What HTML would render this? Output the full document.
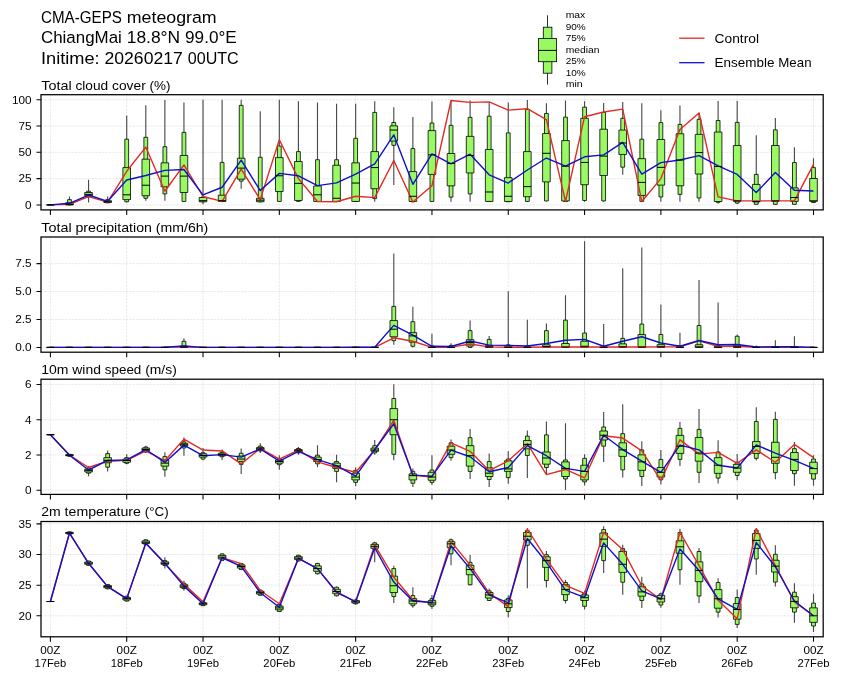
<!DOCTYPE html>
<html><head><meta charset="utf-8"><title>CMA-GEPS meteogram</title>
<style>html,body{margin:0;padding:0;background:#fff;}body{width:841px;height:680px;overflow:hidden;font-family:"Liberation Sans",sans-serif;}svg{display:block}</style>
</head><body>
<svg width="841" height="680" viewBox="0 0 841 680" style="will-change:transform" font-family="Liberation Sans, sans-serif">
<rect width="841" height="680" fill="#fff"/>
<text y="23.00" font-size="16.32" fill="#000"><tspan x="41.00" textLength="80.87" lengthAdjust="spacingAndGlyphs">CMA-GEPS</tspan><tspan x="126.76" textLength="89.95" lengthAdjust="spacingAndGlyphs">meteogram</tspan></text>
<text y="43.30" font-size="16.32" fill="#000"><tspan x="41.00" textLength="80.79" lengthAdjust="spacingAndGlyphs">ChiangMai</tspan><tspan x="126.69" textLength="53.50" lengthAdjust="spacingAndGlyphs">18.8°N</tspan><tspan x="185.08" textLength="51.71" lengthAdjust="spacingAndGlyphs">99.0°E</tspan></text>
<text y="64.10" font-size="16.32" fill="#000"><tspan x="41.00" textLength="58.57" lengthAdjust="spacingAndGlyphs">Initime:</tspan><tspan x="104.46" textLength="78.36" lengthAdjust="spacingAndGlyphs">20260217</tspan><tspan x="187.72" textLength="51.02" lengthAdjust="spacingAndGlyphs">00UTC</tspan></text>
<clipPath id="c0"><rect x="41.0" y="94.7" width="782.2" height="115.2"/></clipPath>
<text y="89.50" font-size="12.83" fill="#000"><tspan x="41.30" textLength="30.32" lengthAdjust="spacingAndGlyphs">Total</tspan><tspan x="75.47" textLength="32.78" lengthAdjust="spacingAndGlyphs">cloud</tspan><tspan x="112.10" textLength="33.64" lengthAdjust="spacingAndGlyphs">cover</tspan><tspan x="149.58" textLength="20.93" lengthAdjust="spacingAndGlyphs">(%)</tspan></text>
<path d="M50.40 94.7V209.9 M126.71 94.7V209.9 M203.02 94.7V209.9 M279.33 94.7V209.9 M355.64 94.7V209.9 M431.95 94.7V209.9 M508.26 94.7V209.9 M584.57 94.7V209.9 M660.88 94.7V209.9 M737.19 94.7V209.9 M813.50 94.7V209.9 M41.0 204.90H823.2 M41.0 178.62H823.2 M41.0 152.34H823.2 M41.0 126.06H823.2 M41.0 99.78H823.2" stroke="#dcdcdc" stroke-width="0.64" stroke-dasharray="2.37 1.02" fill="none"/>
<g clip-path="url(#c0)">
<path d="M69.48 196.49V204.90 M88.56 179.67V202.38 M107.63 196.49V203.32 M126.71 115.55V202.38 M145.79 105.35V200.70 M164.87 99.99V200.70 M183.94 102.41V201.43 M203.02 99.78V204.37 M222.10 99.78V202.27 M241.18 99.78V188.71 M260.25 111.34V202.27 M279.33 99.78V201.75 M298.41 101.15V201.75 M317.49 102.41V201.75 M336.56 103.77V201.75 M355.64 103.77V201.75 M374.72 101.15V201.75 M393.79 107.14V184.93 M412.87 117.12V201.75 M431.95 101.46V201.75 M451.03 100.83V201.75 M470.11 100.52V201.75 M489.18 101.88V201.75 M508.26 102.41V201.75 M527.34 99.99V201.75 M546.41 103.35V201.43 M565.49 100.52V201.75 M584.57 101.15V201.75 M603.65 102.93V201.75 M622.73 101.88V174.84 M641.80 103.35V201.75 M660.88 110.19V201.75 M679.96 105.46V201.75 M699.03 112.71V201.75 M718.11 100.94V203.85 M737.19 100.94V203.85 M756.27 135.21V204.58 M775.35 118.07V204.58 M794.42 147.19V204.58 M813.50 158.23V202.80" stroke="#4c4c4c" stroke-width="1.15" fill="none"/>
<path d="M48.49 204.90H52.31V204.90H48.49Z M67.57 199.64H71.39V204.90H67.57Z M86.65 191.23H90.46V196.70H86.65Z M105.72 199.64H109.54V202.80H105.72Z M124.80 139.20H128.62V201.75H124.80Z M143.88 137.31H147.70V198.28H143.88Z M162.96 146.66H166.77V193.86H162.96Z M182.03 132.37H185.85V201.43H182.03Z M201.11 197.02H204.93V201.75H201.11Z M220.19 162.43H224.01V201.43H220.19Z M239.27 105.35H243.08V181.14H239.27Z M258.34 157.28H262.16V201.75H258.34Z M277.42 146.03H281.24V201.43H277.42Z M296.50 151.60H300.32V201.33H296.50Z M315.58 159.70H319.39V201.43H315.58Z M334.65 159.70H338.47V201.43H334.65Z M353.73 138.25H357.55V201.43H353.73Z M372.81 112.39H376.63V198.59H372.81Z M391.89 122.49H395.70V145.30H391.89Z M410.96 148.56H414.78V201.75H410.96Z M430.04 123.01H433.86V201.43H430.04Z M449.12 125.32H452.94V197.12H449.12Z M468.20 117.34H472.01V193.86H468.20Z M487.27 116.18H491.09V201.43H487.27Z M506.35 132.89H510.17V201.75H506.35Z M525.43 109.45H529.25V201.43H525.43Z M544.51 113.45H548.32V200.91H544.51Z M563.58 117.12H567.40V201.43H563.58Z M582.66 107.14H586.48V200.48H582.66Z M601.74 112.50H605.56V200.91H601.74Z M620.82 118.28H624.63V167.16H620.82Z M639.89 139.20H643.71V201.43H639.89Z M658.97 122.59H662.79V196.91H658.97Z M678.05 124.48H681.87V194.39H678.05Z M697.13 119.33H700.94V197.96H697.13Z M716.20 120.49H720.02V202.27H716.20Z M735.28 122.38H739.10V203.11H735.28Z M754.36 174.42H758.18V204.37H754.36Z M773.44 129.84H777.25V204.37H773.44Z M792.51 162.54H796.33V204.37H792.51Z M811.59 167.58H815.41V202.48H811.59Z" stroke="#000" stroke-width="0.8" fill="#98f962"/>
<path d="M46.58 204.90H54.22V204.90H46.58Z M65.66 202.80H73.29V204.90H65.66Z M84.74 192.50H92.37V195.75H84.74Z M103.82 200.70H111.45V202.48H103.82Z M122.89 167.58H130.53V199.64H122.89Z M141.97 159.17H149.60V195.75H141.97Z M161.05 162.85H168.68V186.82H161.05Z M180.13 155.49H187.76V192.50H180.13Z M199.20 197.54H206.84V201.75H199.20Z M218.28 195.23H225.91V201.43H218.28Z M237.36 158.23H244.99V179.15H237.36Z M256.44 198.28H264.07V201.75H256.44Z M275.51 157.60H283.15V191.55H275.51Z M294.59 161.49H302.22V200.48H294.59Z M313.67 185.98H321.30V201.43H313.67Z M332.75 165.27H340.38V201.43H332.75Z M351.82 162.85H359.46V201.43H351.82Z M370.90 151.60H378.53V188.71H370.90Z M389.98 125.85H397.61V141.09H389.98Z M409.06 171.58H416.69V201.43H409.06Z M428.13 130.58H435.77V174.42H428.13Z M447.21 153.50H454.84V185.87H447.21Z M466.29 136.36H473.92V172.94H466.29Z M485.37 149.50H493.00V201.43H485.37Z M504.44 177.67H512.08V201.43H504.44Z M523.52 151.60H531.15V196.70H523.52Z M542.60 133.52H550.23V181.88H542.60Z M561.68 140.57H569.31V200.91H561.68Z M580.75 118.28H588.39V184.72H580.75Z M599.83 129.21H607.46V175.47H599.83Z M618.91 130.05H626.54V154.44H618.91Z M637.99 158.65H645.62V195.44H637.99Z M657.06 139.52H664.70V185.14H657.06Z M676.14 133.73H683.77V185.77H676.14Z M695.22 134.36H702.85V173.99H695.22Z M714.30 132.05H721.93V201.54H714.30Z M733.37 145.51H741.01V201.22H733.37Z M752.45 184.40H760.08V201.85H752.45Z M771.53 145.51H779.16V201.22H771.53Z M790.61 187.87H798.24V201.43H790.61Z M809.68 178.51H817.32V201.22H809.68Z" stroke="#000" stroke-width="0.8" fill="#98f962"/>
<polyline points="50.40,204.90 69.48,204.37 88.56,196.70 107.63,202.06 126.71,171.26 145.79,147.08 164.87,191.23 183.94,164.95 203.02,196.49 222.10,201.43 241.18,169.16 260.25,199.64 279.33,139.73 298.41,178.62 317.49,201.43 336.56,201.75 355.64,196.28 374.72,197.65 393.79,160.54 412.87,202.06 431.95,185.66 451.03,100.52 470.11,102.41 489.18,101.88 508.26,110.08 527.34,108.72 546.41,119.54 565.49,201.43 584.57,116.70 603.65,111.97 622.73,109.14 641.80,201.43 660.88,178.62 679.96,129.42 699.03,112.92 718.11,196.91 737.19,200.91 756.27,200.91 775.35,200.91 794.42,200.91 813.50,164.43" stroke="#e42a22" stroke-width="1.4" fill="none" stroke-linejoin="round"/>
<polyline points="50.40,204.90 69.48,203.32 88.56,195.02 107.63,201.33 126.71,179.99 145.79,175.47 164.87,170.42 183.94,169.47 203.02,194.81 222.10,187.24 241.18,160.12 260.25,190.60 279.33,173.36 298.41,175.78 317.49,185.66 336.56,182.82 355.64,174.20 374.72,163.90 393.79,134.78 412.87,184.30 431.95,153.81 451.03,163.90 470.11,154.23 489.18,174.84 508.26,183.04 527.34,170.00 546.41,158.02 565.49,166.22 584.57,156.76 603.65,154.86 622.73,142.46 641.80,174.20 660.88,162.64 679.96,160.01 699.03,155.60 718.11,165.80 737.19,174.42 756.27,192.50 775.35,172.52 794.42,190.18 813.50,191.02" stroke="#1010cc" stroke-width="1.4" fill="none" stroke-linejoin="round"/>
<path d="M46.58 204.90H54.22 M65.66 204.37H73.29 M84.74 194.39H92.37 M103.82 201.75H111.45 M122.89 194.81H130.53 M141.97 185.24H149.60 M161.05 176.10H168.68 M180.13 176.10H187.76 M199.20 200.70H206.84 M218.28 200.70H225.91 M237.36 168.11H244.99 M256.44 200.17H264.07 M275.51 175.78H283.15 M294.59 183.35H302.22 M313.67 194.81H321.30 M332.75 198.28H340.38 M351.82 183.04H359.46 M370.90 167.58H378.53 M389.98 130.05H397.61 M409.06 196.28H416.69 M428.13 154.86H435.77 M447.21 163.38H454.84 M466.29 155.49H473.92 M485.37 191.97H493.00 M504.44 196.28H512.08 M523.52 186.61H531.15 M542.60 153.29H550.23 M561.68 166.22H569.31 M580.75 162.43H588.39 M599.83 156.12H607.46 M618.91 142.98H626.54 M637.99 182.40H645.62 M657.06 167.37H664.70 M676.14 160.01H683.77 M695.22 152.55H702.85 M714.30 166.43H721.93 M733.37 200.91H741.01 M752.45 201.54H760.08 M771.53 200.91H779.16 M790.61 197.54H798.24 M809.68 200.91H817.32" stroke="#000" stroke-width="1" fill="none"/>
</g>
<rect x="41.0" y="94.7" width="782.2" height="115.2" fill="none" stroke="#000" stroke-width="1.25"/>
<path d="M50.40 209.9v5.0 M126.71 209.9v5.0 M203.02 209.9v5.0 M279.33 209.9v5.0 M355.64 209.9v5.0 M431.95 209.9v5.0 M508.26 209.9v5.0 M584.57 209.9v5.0 M660.88 209.9v5.0 M737.19 209.9v5.0 M813.50 209.9v5.0 M41.0 204.90h-4.5 M41.0 178.62h-4.5 M41.0 152.34h-4.5 M41.0 126.06h-4.5 M41.0 99.78h-4.5" stroke="#000" stroke-width="1.05" fill="none"/>
<text y="208.70" font-size="10.92" fill="#000"><tspan x="25.05" textLength="6.55" lengthAdjust="spacingAndGlyphs">0</tspan></text>
<text y="182.42" font-size="10.92" fill="#000"><tspan x="18.50" textLength="13.10" lengthAdjust="spacingAndGlyphs">25</tspan></text>
<text y="156.14" font-size="10.92" fill="#000"><tspan x="18.50" textLength="13.10" lengthAdjust="spacingAndGlyphs">50</tspan></text>
<text y="129.86" font-size="10.92" fill="#000"><tspan x="18.50" textLength="13.10" lengthAdjust="spacingAndGlyphs">75</tspan></text>
<text y="103.58" font-size="10.92" fill="#000"><tspan x="11.95" textLength="19.65" lengthAdjust="spacingAndGlyphs">100</tspan></text>
<clipPath id="c1"><rect x="41.0" y="237.0" width="782.2" height="115.19999999999999"/></clipPath>
<text y="231.80" font-size="12.83" fill="#000"><tspan x="41.30" textLength="30.32" lengthAdjust="spacingAndGlyphs">Total</tspan><tspan x="75.47" textLength="76.51" lengthAdjust="spacingAndGlyphs">precipitation</tspan><tspan x="155.83" textLength="52.45" lengthAdjust="spacingAndGlyphs">(mm/6h)</tspan></text>
<path d="M50.40 237.0V352.2 M126.71 237.0V352.2 M203.02 237.0V352.2 M279.33 237.0V352.2 M355.64 237.0V352.2 M431.95 237.0V352.2 M508.26 237.0V352.2 M584.57 237.0V352.2 M660.88 237.0V352.2 M737.19 237.0V352.2 M813.50 237.0V352.2 M41.0 347.40H823.2 M41.0 319.47H823.2 M41.0 291.55H823.2 M41.0 263.62H823.2" stroke="#dcdcdc" stroke-width="0.64" stroke-dasharray="2.37 1.02" fill="none"/>
<g clip-path="url(#c1)">
<path d="M164.87 346.28V347.40 M183.94 338.13V347.40 M355.64 346.28V347.40 M374.72 346.84V347.40 M393.79 253.57V344.83 M412.87 306.74V347.40 M431.95 333.66V347.40 M451.03 343.16V347.40 M470.11 320.59V347.40 M489.18 335.89V347.40 M508.26 291.21V347.40 M527.34 319.70V347.40 M546.41 323.50V347.40 M565.49 295.35V347.40 M584.57 241.28V347.40 M603.65 324.05V347.40 M622.73 268.32V347.40 M641.80 247.43V347.40 M660.88 304.51V347.40 M679.96 332.77V347.40 M699.03 279.93V347.40 M718.11 302.38V347.40 M737.19 334.44V347.40 M756.27 345.61V347.40 M775.35 340.25V347.40 M794.42 336.23V347.40 M813.50 346.84V347.40" stroke="#4c4c4c" stroke-width="1.15" fill="none"/>
<path d="M48.49 347.40H52.31V347.40H48.49Z M67.57 347.40H71.39V347.40H67.57Z M86.65 347.40H90.46V347.40H86.65Z M105.72 347.40H109.54V347.40H105.72Z M124.80 347.40H128.62V347.40H124.80Z M143.88 347.40H147.70V347.40H143.88Z M162.96 347.40H166.77V347.40H162.96Z M182.03 341.26H185.85V347.40H182.03Z M201.11 347.40H204.93V347.40H201.11Z M220.19 347.40H224.01V347.40H220.19Z M239.27 347.40H243.08V347.40H239.27Z M258.34 347.40H262.16V347.40H258.34Z M277.42 347.40H281.24V347.40H277.42Z M296.50 347.40H300.32V347.40H296.50Z M315.58 347.40H319.39V347.40H315.58Z M334.65 347.40H338.47V347.40H334.65Z M353.73 347.40H357.55V347.40H353.73Z M372.81 347.40H376.63V347.40H372.81Z M391.89 306.41H395.70V340.70H391.89Z M410.96 321.71H414.78V346.28H410.96Z M430.04 345.95H433.86V347.40H430.04Z M449.12 345.39H452.94V347.40H449.12Z M468.20 330.64H472.01V347.40H468.20Z M487.27 339.36H491.09V347.40H487.27Z M506.35 344.83H510.17V347.40H506.35Z M525.43 345.72H529.25V347.40H525.43Z M544.51 330.64H548.32V347.40H544.51Z M563.58 320.15H567.40V347.40H563.58Z M582.66 332.99H586.48V347.40H582.66Z M601.74 346.28H605.56V347.40H601.74Z M620.82 338.35H624.63V347.40H620.82Z M639.89 324.05H643.71V347.40H639.89Z M658.97 334.44H662.79V347.40H658.97Z M678.05 345.61H681.87V347.40H678.05Z M697.13 325.51H700.94V347.40H697.13Z M716.20 345.61H720.02V347.40H716.20Z M735.28 336.23H739.10V347.40H735.28Z M754.36 347.18H758.18V347.40H754.36Z M773.44 347.06H777.25V347.40H773.44Z M792.51 347.06H796.33V347.40H792.51Z M811.59 347.40H815.41V347.40H811.59Z" stroke="#000" stroke-width="0.8" fill="#98f962"/>
<path d="M46.58 347.40H54.22V347.40H46.58Z M65.66 347.40H73.29V347.40H65.66Z M84.74 347.40H92.37V347.40H84.74Z M103.82 347.40H111.45V347.40H103.82Z M122.89 347.40H130.53V347.40H122.89Z M141.97 347.40H149.60V347.40H141.97Z M161.05 347.40H168.68V347.40H161.05Z M180.13 346.06H187.76V347.40H180.13Z M199.20 347.40H206.84V347.40H199.20Z M218.28 347.40H225.91V347.40H218.28Z M237.36 347.40H244.99V347.40H237.36Z M256.44 347.40H264.07V347.40H256.44Z M275.51 347.40H283.15V347.40H275.51Z M294.59 347.40H302.22V347.40H294.59Z M313.67 347.40H321.30V347.40H313.67Z M332.75 347.40H340.38V347.40H332.75Z M351.82 347.40H359.46V347.40H351.82Z M370.90 347.40H378.53V347.40H370.90Z M389.98 320.59H397.61V336.79H389.98Z M409.06 332.66H416.69V342.15H409.06Z M428.13 347.06H435.77V347.40H428.13Z M447.21 347.06H454.84V347.40H447.21Z M466.29 339.69H473.92V345.95H466.29Z M485.37 345.39H493.00V347.40H485.37Z M504.44 346.28H512.08V347.40H504.44Z M523.52 347.06H531.15V347.40H523.52Z M542.60 344.83H550.23V347.40H542.60Z M561.68 343.49H569.31V347.40H561.68Z M580.75 341.26H588.39V347.40H580.75Z M599.83 347.06H607.46V347.40H599.83Z M618.91 343.83H626.54V347.40H618.91Z M637.99 334.55H645.62V347.40H637.99Z M657.06 344.72H664.70V347.40H657.06Z M676.14 346.84H683.77V347.40H676.14Z M695.22 344.72H702.85V347.40H695.22Z M714.30 346.28H721.93V347.40H714.30Z M733.37 345.17H741.01V347.40H733.37Z M752.45 347.40H760.08V347.40H752.45Z M771.53 347.40H779.16V347.40H771.53Z M790.61 347.40H798.24V347.40H790.61Z M809.68 347.40H817.32V347.40H809.68Z" stroke="#000" stroke-width="0.8" fill="#98f962"/>
<polyline points="50.40,347.40 69.48,347.40 88.56,347.40 107.63,347.40 126.71,347.40 145.79,347.40 164.87,347.40 183.94,346.84 203.02,347.40 222.10,347.40 241.18,347.40 260.25,347.40 279.33,347.40 298.41,347.40 317.49,347.40 336.56,347.40 355.64,347.40 374.72,347.40 393.79,337.79 412.87,341.26 431.95,347.40 451.03,347.18 470.11,343.94 489.18,346.84 508.26,347.18 527.34,347.18 546.41,347.06 565.49,347.06 584.57,347.06 603.65,347.06 622.73,347.06 641.80,347.06 660.88,346.84 679.96,346.84 699.03,340.92 718.11,346.28 737.19,346.28 756.27,347.40 775.35,347.40 794.42,347.40 813.50,347.40" stroke="#e42a22" stroke-width="1.4" fill="none" stroke-linejoin="round"/>
<polyline points="50.40,347.40 69.48,347.40 88.56,347.40 107.63,347.40 126.71,347.40 145.79,347.40 164.87,347.18 183.94,345.95 203.02,347.40 222.10,347.40 241.18,347.40 260.25,347.40 279.33,347.40 298.41,347.40 317.49,347.40 336.56,347.40 355.64,347.29 374.72,347.29 393.79,325.40 412.87,335.11 431.95,346.28 451.03,346.51 470.11,341.03 489.18,345.17 508.26,345.39 527.34,345.95 546.41,343.49 565.49,340.25 584.57,339.36 603.65,346.28 622.73,341.26 641.80,336.79 660.88,343.04 679.96,346.28 699.03,340.47 718.11,344.72 737.19,344.50 756.27,347.06 775.35,346.62 794.42,346.73 813.50,347.40" stroke="#1010cc" stroke-width="1.4" fill="none" stroke-linejoin="round"/>
<path d="M46.58 347.40H54.22 M65.66 347.40H73.29 M84.74 347.40H92.37 M103.82 347.40H111.45 M122.89 347.40H130.53 M141.97 347.40H149.60 M161.05 347.40H168.68 M180.13 347.18H187.76 M199.20 347.40H206.84 M218.28 347.40H225.91 M237.36 347.40H244.99 M256.44 347.40H264.07 M275.51 347.40H283.15 M294.59 347.40H302.22 M313.67 347.40H321.30 M332.75 347.40H340.38 M351.82 347.40H359.46 M370.90 347.40H378.53 M389.98 329.19H397.61 M409.06 335.89H416.69 M428.13 347.40H435.77 M447.21 347.40H454.84 M466.29 342.60H473.92 M485.37 346.84H493.00 M504.44 347.40H512.08 M523.52 347.40H531.15 M542.60 346.51H550.23 M561.68 347.06H569.31 M580.75 346.28H588.39 M599.83 347.40H607.46 M618.91 346.84H626.54 M637.99 347.06H645.62 M657.06 346.84H664.70 M676.14 347.40H683.77 M695.22 346.84H702.85 M714.30 347.18H721.93 M733.37 346.84H741.01 M752.45 347.40H760.08 M771.53 347.40H779.16 M790.61 347.40H798.24 M809.68 347.40H817.32" stroke="#000" stroke-width="1" fill="none"/>
</g>
<rect x="41.0" y="237.0" width="782.2" height="115.19999999999999" fill="none" stroke="#000" stroke-width="1.25"/>
<path d="M50.40 352.2v5.0 M126.71 352.2v5.0 M203.02 352.2v5.0 M279.33 352.2v5.0 M355.64 352.2v5.0 M431.95 352.2v5.0 M508.26 352.2v5.0 M584.57 352.2v5.0 M660.88 352.2v5.0 M737.19 352.2v5.0 M813.50 352.2v5.0 M41.0 347.40h-4.5 M41.0 319.47h-4.5 M41.0 291.55h-4.5 M41.0 263.62h-4.5" stroke="#000" stroke-width="1.05" fill="none"/>
<text y="351.20" font-size="10.92" fill="#000"><tspan x="15.22" textLength="16.38" lengthAdjust="spacingAndGlyphs">0.0</tspan></text>
<text y="323.27" font-size="10.92" fill="#000"><tspan x="15.22" textLength="16.38" lengthAdjust="spacingAndGlyphs">2.5</tspan></text>
<text y="295.35" font-size="10.92" fill="#000"><tspan x="15.22" textLength="16.38" lengthAdjust="spacingAndGlyphs">5.0</tspan></text>
<text y="267.43" font-size="10.92" fill="#000"><tspan x="15.22" textLength="16.38" lengthAdjust="spacingAndGlyphs">7.5</tspan></text>
<clipPath id="c2"><rect x="41.0" y="379.2" width="782.2" height="115.19999999999999"/></clipPath>
<text y="374.10" font-size="12.83" fill="#000"><tspan x="41.30" textLength="27.18" lengthAdjust="spacingAndGlyphs">10m</tspan><tspan x="72.32" textLength="28.62" lengthAdjust="spacingAndGlyphs">wind</tspan><tspan x="104.79" textLength="36.55" lengthAdjust="spacingAndGlyphs">speed</tspan><tspan x="145.19" textLength="31.61" lengthAdjust="spacingAndGlyphs">(m/s)</tspan></text>
<path d="M50.40 379.2V494.4 M126.71 379.2V494.4 M203.02 379.2V494.4 M279.33 379.2V494.4 M355.64 379.2V494.4 M431.95 379.2V494.4 M508.26 379.2V494.4 M584.57 379.2V494.4 M660.88 379.2V494.4 M737.19 379.2V494.4 M813.50 379.2V494.4 M41.0 490.30H823.2 M41.0 455.00H823.2 M41.0 419.70H823.2 M41.0 384.40H823.2" stroke="#dcdcdc" stroke-width="0.64" stroke-dasharray="2.37 1.02" fill="none"/>
<g clip-path="url(#c2)">
<path d="M69.48 453.94V456.76 M88.56 465.94V476.18 M107.63 450.41V471.41 M126.71 454.29V464.18 M145.79 445.65V452.88 M164.87 452.35V476.71 M183.94 437.53V455.71 M203.02 448.12V460.30 M222.10 449.53V459.94 M241.18 448.47V473.89 M260.25 443.35V452.88 M279.33 455.18V469.83 M298.41 447.06V454.65 M317.49 445.29V467.18 M336.56 454.82V482.36 M355.64 467.53V486.24 M374.72 440.00V454.65 M393.79 384.22V460.30 M412.87 468.41V486.95 M431.95 455.18V485.00 M451.03 439.47V460.82 M470.11 429.05V479.00 M489.18 453.59V486.95 M508.26 451.29V483.77 M527.34 430.47V477.94 M546.41 421.47V474.24 M565.49 423.23V489.95 M584.57 454.29V485.53 M603.65 411.93V461.88 M622.73 404.17V477.59 M641.80 441.23V486.06 M660.88 449.88V484.48 M679.96 421.99V465.94 M699.03 409.11V483.06 M718.11 440.17V483.59 M737.19 454.12V480.24 M756.27 407.35V460.47 M775.35 411.76V479.36 M794.42 441.94V485.71 M813.50 455.18V485.71" stroke="#4c4c4c" stroke-width="1.15" fill="none"/>
<path d="M48.49 434.70H52.31V434.70H48.49Z M67.57 454.29H71.39V456.24H67.57Z M86.65 467.88H90.46V473.18H86.65Z M105.72 453.59H109.54V467.18H105.72Z M124.80 457.65H128.62V463.30H124.80Z M143.88 447.06H147.70V452.00H143.88Z M162.96 456.59H166.77V469.83H162.96Z M182.03 441.94H185.85V447.94H182.03Z M201.11 452.71H204.93V459.06H201.11Z M220.19 452.35H224.01V456.76H220.19Z M239.27 453.24H243.08V464.35H239.27Z M258.34 446.18H262.16V450.94H258.34Z M277.42 458.35H281.24V464.71H277.42Z M296.50 448.47H300.32V452.88H296.50Z M315.58 455.18H319.39V463.82H315.58Z M334.65 461.53H338.47V471.41H334.65Z M353.73 470.36H357.55V482.36H353.73Z M372.81 445.65H376.63V452.88H372.81Z M391.89 398.52H395.70V454.29H391.89Z M410.96 471.41H414.78V483.24H410.96Z M430.04 470.00H433.86V482.36H430.04Z M449.12 442.82H452.94V457.65H449.12Z M468.20 437.70H472.01V471.41H468.20Z M487.27 461.53H491.09V479.53H487.27Z M506.35 459.06H510.17V477.59H506.35Z M525.43 436.11H529.25V455.53H525.43Z M544.51 434.88H548.32V467.53H544.51Z M563.58 459.94H567.40V479.00H563.58Z M582.66 458.35H586.48V481.83H582.66Z M601.74 426.94H605.56V446.18H601.74Z M620.82 433.64H624.63V469.83H620.82Z M639.89 449.88H643.71V476.53H639.89Z M658.97 459.41H662.79V479.71H658.97Z M678.05 428.35H681.87V459.41H678.05Z M697.13 429.41H700.94V472.30H697.13Z M716.20 452.00H720.02V478.12H716.20Z M735.28 462.24H739.10V475.47H735.28Z M754.36 421.47H758.18V458.35H754.36Z M773.44 419.35H777.25V472.65H773.44Z M792.51 448.65H796.33V473.71H792.51Z M811.59 459.06H815.41V479.18H811.59Z" stroke="#000" stroke-width="0.8" fill="#98f962"/>
<path d="M46.58 434.70H54.22V434.70H46.58Z M65.66 454.65H73.29V455.71H65.66Z M84.74 469.12H92.37V471.94H84.74Z M103.82 457.65H111.45V462.77H103.82Z M122.89 459.06H130.53V462.24H122.89Z M141.97 448.12H149.60V450.76H141.97Z M161.05 459.94H168.68V466.12H161.05Z M180.13 443.35H187.76V446.00H180.13Z M199.20 453.76H206.84V457.12H199.20Z M218.28 453.24H225.91V455.71H218.28Z M237.36 456.06H244.99V461.53H237.36Z M256.44 447.59H264.07V450.06H256.44Z M275.51 459.94H283.15V463.12H275.51Z M294.59 449.53H302.22V452.00H294.59Z M313.67 457.12H321.30V461.53H313.67Z M332.75 463.12H340.38V468.41H332.75Z M351.82 473.18H359.46V479.89H351.82Z M370.90 448.12H378.53V451.29H370.90Z M389.98 408.58H397.61V434.70H389.98Z M409.06 473.89H416.69V479.89H409.06Z M428.13 472.30H435.77V480.24H428.13Z M447.21 446.18H454.84V454.29H447.21Z M466.29 445.65H473.92V466.12H466.29Z M485.37 467.88H493.00V476.53H485.37Z M504.44 460.82H512.08V471.41H504.44Z M523.52 440.53H531.15V448.82H523.52Z M542.60 452.00H550.23V464.18H542.60Z M561.68 461.88H569.31V476.53H561.68Z M580.75 465.24H588.39V479.89H580.75Z M599.83 431.00H607.46V440.00H599.83Z M618.91 442.82H626.54V456.41H618.91Z M637.99 454.82H645.62V470.36H637.99Z M657.06 467.53H664.70V477.06H657.06Z M676.14 435.41H683.77V453.41H676.14Z M695.22 437.53H702.85V461.18H695.22Z M714.30 457.65H721.93V473.36H714.30Z M733.37 464.35H741.01V472.30H733.37Z M752.45 441.59H760.08V453.41H752.45Z M771.53 442.29H779.16V463.30H771.53Z M790.61 452.53H798.24V470.53H790.61Z M809.68 462.24H817.32V473.71H809.68Z" stroke="#000" stroke-width="0.8" fill="#98f962"/>
<polyline points="50.40,434.70 69.48,455.00 88.56,467.53 107.63,461.18 126.71,460.30 145.79,450.94 164.87,460.82 183.94,439.12 203.02,450.06 222.10,450.94 241.18,463.82 260.25,448.47 279.33,459.06 298.41,450.06 317.49,461.88 336.56,467.53 355.64,472.30 374.72,450.06 393.79,420.41 412.87,475.12 431.95,477.06 451.03,442.82 470.11,451.29 489.18,470.71 508.26,460.82 527.34,443.70 546.41,474.59 565.49,469.47 584.57,477.94 603.65,435.76 622.73,438.06 641.80,450.94 660.88,480.42 679.96,439.82 699.03,454.12 718.11,452.35 737.19,463.30 756.27,449.88 775.35,462.24 794.42,444.41 813.50,457.65" stroke="#e42a22" stroke-width="1.4" fill="none" stroke-linejoin="round"/>
<polyline points="50.40,434.70 69.48,455.18 88.56,470.00 107.63,460.47 126.71,459.94 145.79,449.53 164.87,462.41 183.94,445.12 203.02,455.71 222.10,454.65 241.18,457.12 260.25,449.00 279.33,461.18 298.41,451.29 317.49,459.59 336.56,465.59 355.64,476.18 374.72,449.53 393.79,423.76 412.87,475.12 431.95,476.18 451.03,450.06 470.11,456.76 489.18,471.77 508.26,467.53 527.34,445.65 546.41,455.71 565.49,468.41 584.57,471.41 603.65,435.23 622.73,449.53 641.80,461.18 660.88,472.30 679.96,445.12 699.03,449.88 718.11,465.24 737.19,468.06 756.27,444.94 775.35,453.06 794.42,460.47 813.50,468.41" stroke="#1010cc" stroke-width="1.4" fill="none" stroke-linejoin="round"/>
<path d="M46.58 434.70H54.22 M65.66 455.18H73.29 M84.74 470.36H92.37 M103.82 460.30H111.45 M122.89 460.47H130.53 M141.97 449.53H149.60 M161.05 463.12H168.68 M180.13 444.76H187.76 M199.20 455.53H206.84 M218.28 454.65H225.91 M237.36 459.06H244.99 M256.44 448.82H264.07 M275.51 461.53H283.15 M294.59 450.76H302.22 M313.67 459.59H321.30 M332.75 465.94H340.38 M351.82 477.06H359.46 M370.90 450.06H378.53 M389.98 419.70H397.61 M409.06 475.65H416.69 M428.13 477.06H435.77 M447.21 450.06H454.84 M466.29 455.71H473.92 M485.37 473.18H493.00 M504.44 468.94H512.08 M523.52 444.41H531.15 M542.60 458.00H550.23 M561.68 468.41H569.31 M580.75 471.41H588.39 M599.83 435.23H607.46 M618.91 449.88H626.54 M637.99 461.88H645.62 M657.06 472.30H664.70 M676.14 446.18H683.77 M695.22 453.06H702.85 M714.30 465.24H721.93 M733.37 468.06H741.01 M752.45 446.53H760.08 M771.53 457.29H779.16 M790.61 459.41H798.24 M809.68 468.59H817.32" stroke="#000" stroke-width="1" fill="none"/>
</g>
<rect x="41.0" y="379.2" width="782.2" height="115.19999999999999" fill="none" stroke="#000" stroke-width="1.25"/>
<path d="M50.40 494.4v5.0 M126.71 494.4v5.0 M203.02 494.4v5.0 M279.33 494.4v5.0 M355.64 494.4v5.0 M431.95 494.4v5.0 M508.26 494.4v5.0 M584.57 494.4v5.0 M660.88 494.4v5.0 M737.19 494.4v5.0 M813.50 494.4v5.0 M41.0 490.30h-4.5 M41.0 455.00h-4.5 M41.0 419.70h-4.5 M41.0 384.40h-4.5" stroke="#000" stroke-width="1.05" fill="none"/>
<text y="494.10" font-size="10.92" fill="#000"><tspan x="25.05" textLength="6.55" lengthAdjust="spacingAndGlyphs">0</tspan></text>
<text y="458.80" font-size="10.92" fill="#000"><tspan x="25.05" textLength="6.55" lengthAdjust="spacingAndGlyphs">2</tspan></text>
<text y="423.50" font-size="10.92" fill="#000"><tspan x="25.05" textLength="6.55" lengthAdjust="spacingAndGlyphs">4</tspan></text>
<text y="388.20" font-size="10.92" fill="#000"><tspan x="25.05" textLength="6.55" lengthAdjust="spacingAndGlyphs">6</tspan></text>
<clipPath id="c3"><rect x="41.0" y="521.5" width="782.2" height="115.29999999999995"/></clipPath>
<text y="516.40" font-size="12.83" fill="#000"><tspan x="41.30" textLength="19.48" lengthAdjust="spacingAndGlyphs">2m</tspan><tspan x="64.63" textLength="76.31" lengthAdjust="spacingAndGlyphs">temperature</tspan><tspan x="144.79" textLength="23.93" lengthAdjust="spacingAndGlyphs">(°C)</tspan></text>
<path d="M50.40 521.5V636.8 M126.71 521.5V636.8 M203.02 521.5V636.8 M279.33 521.5V636.8 M355.64 521.5V636.8 M431.95 521.5V636.8 M508.26 521.5V636.8 M584.57 521.5V636.8 M660.88 521.5V636.8 M737.19 521.5V636.8 M813.50 521.5V636.8 M41.0 615.80H823.2 M41.0 585.15H823.2 M41.0 554.50H823.2 M41.0 523.85H823.2" stroke="#dcdcdc" stroke-width="0.64" stroke-dasharray="2.37 1.02" fill="none"/>
<g clip-path="url(#c3)">
<path d="M69.48 531.64V534.45 M88.56 560.63V565.72 M107.63 584.17V589.20 M126.71 595.82V601.46 M145.79 539.42V545.06 M164.87 557.14V568.60 M183.94 580.86V590.67 M203.02 601.58V605.99 M222.10 553.40V560.88 M241.18 562.96V570.01 M260.25 589.69V595.69 M279.33 603.85V612.06 M298.41 554.75V561.49 M317.49 562.65V574.55 M336.56 586.56V596.49 M355.64 598.45V604.77 M374.72 541.63V562.29 M393.79 565.72V602.93 M412.87 587.23V607.83 M431.95 594.96V609.06 M451.03 538.56V565.17 M470.11 555.11V585.15 M489.18 588.58V601.09 M508.26 595.26V617.15 M527.34 528.14V588.21 M546.41 551.07V587.60 M565.49 579.63V603.54 M584.57 590.85V609.55 M603.65 526.30V572.89 M622.73 544.69V594.65 M641.80 576.75V608.01 M660.88 592.38V607.83 M679.96 528.75V584.66 M699.03 547.88V602.93 M718.11 578.28V617.39 M737.19 589.62V628.06 M756.27 527.96V574.73 M775.35 545.30V586.38 M794.42 583.19V622.79 M813.50 593.85V631.98" stroke="#4c4c4c" stroke-width="1.15" fill="none"/>
<path d="M48.49 601.52H52.31V601.52H48.49Z M67.57 531.82H71.39V534.27H67.57Z M86.65 561.00H90.46V565.35H86.65Z M105.72 584.54H109.54V588.83H105.72Z M124.80 596.18H128.62V601.09H124.80Z M143.88 539.79H147.70V544.69H143.88Z M162.96 560.63H166.77V565.53H162.96Z M182.03 583.31H185.85V588.58H182.03Z M201.11 601.88H204.93V605.69H201.11Z M220.19 553.89H224.01V560.38H220.19Z M239.27 563.45H243.08V569.52H239.27Z M258.34 590.12H262.16V595.26H258.34Z M277.42 604.40H281.24V611.51H277.42Z M296.50 555.24H300.32V561.00H296.50Z M315.58 563.45H319.39V573.75H315.58Z M334.65 587.23H338.47V595.82H334.65Z M353.73 599.98H357.55V603.79H353.73Z M372.81 542.85H376.63V549.60H372.81Z M391.89 568.60H395.70V596.55H391.89Z M410.96 595.57H414.78V605.69H410.96Z M430.04 598.64H433.86V606.30H430.04Z M449.12 539.79H452.94V553.89H449.12Z M468.20 562.29H472.01V584.78H468.20Z M487.27 590.85H491.09V600.47H487.27Z M506.35 598.45H510.17V611.51H506.35Z M525.43 530.59H529.25V545.30H525.43Z M544.51 554.68H548.32V580.55H544.51Z M563.58 582.51H567.40V600.47H563.58Z M582.66 593.36H586.48V606.30H582.66Z M601.74 529.55H605.56V560.63H601.74Z M620.82 548.62H624.63V582.27H620.82Z M639.89 583.92H643.71V600.47H639.89Z M658.97 593.85H662.79V605.01H658.97Z M678.05 532.43H681.87V569.70H678.05Z M697.13 551.50H700.94V596.00H697.13Z M716.20 582.51H720.02V612.12H716.20Z M735.28 597.53H739.10V624.38H735.28Z M754.36 530.10H758.18V558.97H754.36Z M773.44 554.32H777.25V582.09H773.44Z M792.51 592.20H796.33V612.12H792.51Z M811.59 603.11H815.41V625.98H811.59Z" stroke="#000" stroke-width="0.8" fill="#98f962"/>
<path d="M46.58 601.52H54.22V601.52H46.58Z M65.66 532.43H73.29V533.66H65.66Z M84.74 562.04H92.37V564.31H84.74Z M103.82 585.58H111.45V587.79H103.82Z M122.89 597.35H130.53V599.92H122.89Z M141.97 540.95H149.60V543.53H141.97Z M161.05 561.86H168.68V564.31H161.05Z M180.13 584.78H187.76V587.60H180.13Z M199.20 602.80H206.84V604.77H199.20Z M218.28 555.42H225.91V558.85H218.28Z M237.36 564.92H244.99V568.05H237.36Z M256.44 591.34H264.07V594.04H256.44Z M275.51 606.11H283.15V609.79H275.51Z M294.59 556.65H302.22V559.59H294.59Z M313.67 565.90H321.30V571.30H313.67Z M332.75 589.32H340.38V593.73H332.75Z M351.82 600.60H359.46V602.93H351.82Z M370.90 544.39H378.53V548.25H370.90Z M389.98 576.20H397.61V592.51H389.98Z M409.06 598.64H416.69V603.79H409.06Z M428.13 600.60H435.77V604.77H428.13Z M447.21 541.63H454.84V547.76H447.21Z M466.29 565.35H473.92V574.73H466.29Z M485.37 592.51H493.00V598.02H485.37Z M504.44 599.98H512.08V607.59H504.44Z M523.52 532.43H531.15V540.03H523.52Z M542.60 556.77H550.23V567.37H542.60Z M561.68 584.78H569.31V594.65H561.68Z M580.75 594.96H588.39V600.47H580.75Z M599.83 533.04H607.46V546.29H599.83Z M618.91 551.43H626.54V572.40H618.91Z M637.99 586.68H645.62V596.18H637.99Z M657.06 595.39H664.70V602.01H657.06Z M676.14 540.83H683.77V553.27H676.14Z M695.22 561.86H702.85V581.66H695.22Z M714.30 589.62H721.93V608.20H714.30Z M733.37 603.54H741.01V619.17H733.37Z M752.45 533.54H760.08V548.37H752.45Z M771.53 560.26H779.16V572.03H771.53Z M790.61 596.67H798.24V607.83H790.61Z M809.68 607.83H817.32V622.36H809.68Z" stroke="#000" stroke-width="0.8" fill="#98f962"/>
<polyline points="50.40,601.52 69.48,533.04 88.56,563.27 107.63,586.68 126.71,598.64 145.79,543.28 164.87,563.69 183.94,583.92 203.02,601.88 222.10,557.75 241.18,563.69 260.25,590.48 279.33,603.79 298.41,558.48 317.49,568.60 336.56,592.51 355.64,601.52 374.72,545.18 393.79,577.18 412.87,599.98 431.95,602.93 451.03,541.63 470.11,564.92 489.18,593.12 508.26,606.61 527.34,529.00 546.41,559.10 565.49,585.33 584.57,593.36 603.65,532.43 622.73,549.60 641.80,585.76 660.88,599.68 679.96,532.25 699.03,565.53 718.11,600.29 737.19,618.87 756.27,528.75 775.35,565.66 794.42,602.01 813.50,615.80" stroke="#e42a22" stroke-width="1.4" fill="none" stroke-linejoin="round"/>
<polyline points="50.40,601.52 69.48,533.04 88.56,563.27 107.63,586.68 126.71,598.64 145.79,543.28 164.87,563.27 183.94,586.13 203.02,603.79 222.10,557.75 241.18,566.33 260.25,592.75 279.33,607.22 298.41,558.48 317.49,568.60 336.56,591.89 355.64,601.88 374.72,547.76 393.79,582.09 412.87,600.97 431.95,602.50 451.03,545.73 470.11,568.60 489.18,594.96 508.26,602.93 527.34,538.56 546.41,562.29 565.49,590.05 584.57,597.41 603.65,542.85 622.73,564.31 641.80,590.85 660.88,598.82 679.96,548.98 699.03,570.44 718.11,598.82 737.19,609.30 756.27,542.55 775.35,566.76 794.42,600.97 813.50,615.80" stroke="#1010cc" stroke-width="1.4" fill="none" stroke-linejoin="round"/>
<path d="M46.58 601.52H54.22 M65.66 533.04H73.29 M84.74 563.14H92.37 M103.82 586.68H111.45 M122.89 598.64H130.53 M141.97 542.24H149.60 M161.05 563.27H168.68 M180.13 586.13H187.76 M199.20 603.79H206.84 M218.28 557.14H225.91 M237.36 566.45H244.99 M256.44 592.69H264.07 M275.51 607.95H283.15 M294.59 558.12H302.22 M313.67 568.60H321.30 M332.75 591.53H340.38 M351.82 601.88H359.46 M370.90 546.29H378.53 M389.98 585.76H397.61 M409.06 600.97H416.69 M428.13 602.93H435.77 M447.21 543.83H454.84 M466.29 569.52H473.92 M485.37 594.96H493.00 M504.44 603.79H512.08 M523.52 536.23H531.15 M542.60 560.63H550.23 M561.68 589.44H569.31 M580.75 597.72H588.39 M599.83 539.17H607.46 M618.91 564.31H626.54 M637.99 591.89H645.62 M657.06 598.82H664.70 M676.14 546.78H683.77 M695.22 570.44H702.85 M714.30 598.82H721.93 M733.37 609.49H741.01 M752.45 540.40H760.08 M771.53 566.15H779.16 M790.61 601.39H798.24 M809.68 615.80H817.32" stroke="#000" stroke-width="1" fill="none"/>
</g>
<rect x="41.0" y="521.5" width="782.2" height="115.29999999999995" fill="none" stroke="#000" stroke-width="1.25"/>
<path d="M50.40 636.8v5.0 M126.71 636.8v5.0 M203.02 636.8v5.0 M279.33 636.8v5.0 M355.64 636.8v5.0 M431.95 636.8v5.0 M508.26 636.8v5.0 M584.57 636.8v5.0 M660.88 636.8v5.0 M737.19 636.8v5.0 M813.50 636.8v5.0 M41.0 615.80h-4.5 M41.0 585.15h-4.5 M41.0 554.50h-4.5 M41.0 523.85h-4.5" stroke="#000" stroke-width="1.05" fill="none"/>
<text y="619.60" font-size="10.92" fill="#000"><tspan x="18.50" textLength="13.10" lengthAdjust="spacingAndGlyphs">20</tspan></text>
<text y="588.95" font-size="10.92" fill="#000"><tspan x="18.50" textLength="13.10" lengthAdjust="spacingAndGlyphs">25</tspan></text>
<text y="558.30" font-size="10.92" fill="#000"><tspan x="18.50" textLength="13.10" lengthAdjust="spacingAndGlyphs">30</tspan></text>
<text y="527.65" font-size="10.92" fill="#000"><tspan x="18.50" textLength="13.10" lengthAdjust="spacingAndGlyphs">35</tspan></text>
<text y="654.40" font-size="10.92" fill="#000"><tspan x="40.32" textLength="20.16" lengthAdjust="spacingAndGlyphs">00Z</tspan></text>
<text y="666.70" font-size="10.92" fill="#000"><tspan x="34.45" textLength="31.90" lengthAdjust="spacingAndGlyphs">17Feb</tspan></text>
<text y="654.40" font-size="10.92" fill="#000"><tspan x="116.63" textLength="20.16" lengthAdjust="spacingAndGlyphs">00Z</tspan></text>
<text y="666.70" font-size="10.92" fill="#000"><tspan x="110.76" textLength="31.90" lengthAdjust="spacingAndGlyphs">18Feb</tspan></text>
<text y="654.40" font-size="10.92" fill="#000"><tspan x="192.94" textLength="20.16" lengthAdjust="spacingAndGlyphs">00Z</tspan></text>
<text y="666.70" font-size="10.92" fill="#000"><tspan x="187.07" textLength="31.90" lengthAdjust="spacingAndGlyphs">19Feb</tspan></text>
<text y="654.40" font-size="10.92" fill="#000"><tspan x="269.25" textLength="20.16" lengthAdjust="spacingAndGlyphs">00Z</tspan></text>
<text y="666.70" font-size="10.92" fill="#000"><tspan x="263.38" textLength="31.90" lengthAdjust="spacingAndGlyphs">20Feb</tspan></text>
<text y="654.40" font-size="10.92" fill="#000"><tspan x="345.56" textLength="20.16" lengthAdjust="spacingAndGlyphs">00Z</tspan></text>
<text y="666.70" font-size="10.92" fill="#000"><tspan x="339.69" textLength="31.90" lengthAdjust="spacingAndGlyphs">21Feb</tspan></text>
<text y="654.40" font-size="10.92" fill="#000"><tspan x="421.87" textLength="20.16" lengthAdjust="spacingAndGlyphs">00Z</tspan></text>
<text y="666.70" font-size="10.92" fill="#000"><tspan x="416.00" textLength="31.90" lengthAdjust="spacingAndGlyphs">22Feb</tspan></text>
<text y="654.40" font-size="10.92" fill="#000"><tspan x="498.18" textLength="20.16" lengthAdjust="spacingAndGlyphs">00Z</tspan></text>
<text y="666.70" font-size="10.92" fill="#000"><tspan x="492.31" textLength="31.90" lengthAdjust="spacingAndGlyphs">23Feb</tspan></text>
<text y="654.40" font-size="10.92" fill="#000"><tspan x="574.49" textLength="20.16" lengthAdjust="spacingAndGlyphs">00Z</tspan></text>
<text y="666.70" font-size="10.92" fill="#000"><tspan x="568.62" textLength="31.90" lengthAdjust="spacingAndGlyphs">24Feb</tspan></text>
<text y="654.40" font-size="10.92" fill="#000"><tspan x="650.80" textLength="20.16" lengthAdjust="spacingAndGlyphs">00Z</tspan></text>
<text y="666.70" font-size="10.92" fill="#000"><tspan x="644.93" textLength="31.90" lengthAdjust="spacingAndGlyphs">25Feb</tspan></text>
<text y="654.40" font-size="10.92" fill="#000"><tspan x="727.11" textLength="20.16" lengthAdjust="spacingAndGlyphs">00Z</tspan></text>
<text y="666.70" font-size="10.92" fill="#000"><tspan x="721.24" textLength="31.90" lengthAdjust="spacingAndGlyphs">26Feb</tspan></text>
<text y="654.40" font-size="10.92" fill="#000"><tspan x="803.42" textLength="20.16" lengthAdjust="spacingAndGlyphs">00Z</tspan></text>
<text y="666.70" font-size="10.92" fill="#000"><tspan x="797.55" textLength="31.90" lengthAdjust="spacingAndGlyphs">27Feb</tspan></text>
<path d="M547.5 15.3V84.6" stroke="#333" stroke-width="1"/>
<rect x="543.3" y="27.2" width="8.6" height="46" fill="#98f962" stroke="#000" stroke-width="0.8"/>
<rect x="538.4" y="38.6" width="18.2" height="23.1" fill="#98f962" stroke="#000" stroke-width="0.8"/>
<path d="M538.4 50.4H556.6" stroke="#000" stroke-width="1"/>
<text y="18.40" font-size="9.54" fill="#000"><tspan x="565.70" textLength="19.61" lengthAdjust="spacingAndGlyphs">max</tspan></text>
<text y="29.82" font-size="9.54" fill="#000"><tspan x="565.70" textLength="20.00" lengthAdjust="spacingAndGlyphs">90%</tspan></text>
<text y="41.24" font-size="9.54" fill="#000"><tspan x="565.70" textLength="20.00" lengthAdjust="spacingAndGlyphs">75%</tspan></text>
<text y="52.66" font-size="9.54" fill="#000"><tspan x="565.70" textLength="33.74" lengthAdjust="spacingAndGlyphs">median</tspan></text>
<text y="64.08" font-size="9.54" fill="#000"><tspan x="565.70" textLength="20.00" lengthAdjust="spacingAndGlyphs">25%</tspan></text>
<text y="75.50" font-size="9.54" fill="#000"><tspan x="565.70" textLength="20.00" lengthAdjust="spacingAndGlyphs">10%</tspan></text>
<text y="86.92" font-size="9.54" fill="#000"><tspan x="565.70" textLength="16.97" lengthAdjust="spacingAndGlyphs">min</tspan></text>
<path d="M679.2 38.2H704.5" stroke="#e42a22" stroke-width="1.3"/>
<path d="M679.2 62.7H704.5" stroke="#1010cc" stroke-width="1.3"/>
<text y="42.70" font-size="12.93" fill="#000"><tspan x="714.60" textLength="44.37" lengthAdjust="spacingAndGlyphs">Control</tspan></text>
<text y="67.10" font-size="12.93" fill="#000"><tspan x="714.60" textLength="59.83" lengthAdjust="spacingAndGlyphs">Ensemble</tspan><tspan x="778.31" textLength="33.24" lengthAdjust="spacingAndGlyphs">Mean</tspan></text>
</svg>
</body></html>
